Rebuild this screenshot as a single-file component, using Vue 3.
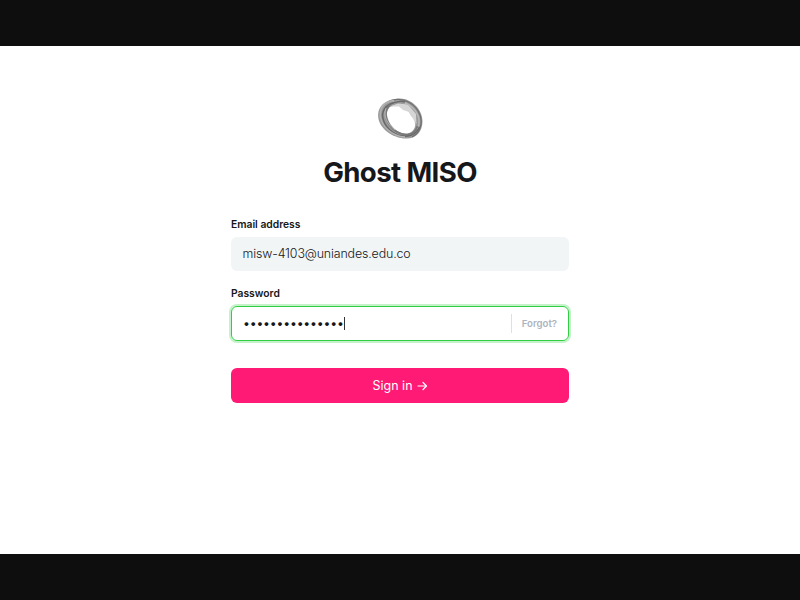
<script setup>
import { ref } from 'vue'

const email = ref('misw-4103@uniandes.edu.co')
const masked = ref('•'.repeat(15))
</script>

<template>
  <div class="screen">
    <main class="panel">
      <form class="form" @submit.prevent>
        <header class="head">
          <svg class="logo" viewBox="0 0 60 56" aria-hidden="true">
            <path d="M22 12C34 8 47 17 49 28C51 37 47 43 41 45L45 39C46 34 44 29 41 26L38 21L33 19L29 16L19 17Z" fill="#d3d3d3" />
            <path fill-rule="evenodd" fill="#9a9a9a" d="M29 8.400C41 7.800 52.500 19 52.500 31C52.500 42 46 49 36 48.600C22 48.200 9 38 8.200 27C7.300 16 16 8.800 29 8.400ZM28 14.500C21 14.300 16.500 18.500 17 25C18 34 26 43 35 43.800C42 44 46 38.500 45.500 32C44.500 22.500 37 14.600 28 14.500Z" />
            <path d="M28 13.500L38 14.500L46 24L46.500 34L43 27L39 22L33 20L29 16.500L22 16Z" fill="#d6d6d6" />
            <path d="M20 10.800C33 6 46 14 50 25C53 34 50 43 42 46.800" fill="none" stroke="#707070" stroke-width="1.300" />
            <path d="M23 12C35 9.500 45 17 48.500 27C50.500 35 47 42 41 45" fill="none" stroke="#b8b8b8" stroke-width="1.500" />
            <path d="M35 12C24 10 13 15.500 12.500 25C13 34 19 41.500 28 45C37 48 46 45 49.500 37" fill="none" stroke="#686868" stroke-width="1.600" />
            <path d="M24 10.500C15 11.500 10 17 10.200 26C12 37 22 46 35 47" fill="none" stroke="#b2b2b2" stroke-width="1.400" />
            <path d="M20 15C14.500 20 14.500 28 19.500 35C24 41 31 45 38 44.500C43 44 46 41 47.500 36" fill="none" stroke="#787878" stroke-width="1.800" />
            <path d="M16 18C13 26 17 34 25 40" fill="none" stroke="#c4c4c4" stroke-width=".8" />
          </svg>
          <h1 class="title">Ghost MISO</h1>
        </header>

        <div class="label">Email address</div>
        <div class="field email">{{ email }}</div>

        <div class="label second">Password</div>
        <div class="field password">
          <span class="dots">{{ masked }}</span>
          <span class="caret"></span>
          <button class="forgot" type="button">Forgot?</button>
        </div>

        <button class="submit" type="submit">
          <span>Sign in</span>
          <svg class="arrow" viewBox="0 0 11 10" aria-hidden="true">
            <path d="M1 5H9.500M6 1.500L9.500 5L6 8.500" />
          </svg>
        </button>
      </form>
    </main>
  </div>
</template>

<style>
body {
  margin: 0;
}
</style>

<style scoped>
.screen {
  box-sizing: border-box;
  height: 600px;
  padding: 46px 0;
  background: #0e0e0e;
  font-family: Inter, sans-serif;
  color: #15171a;
}
.panel {
  display: flex;
  justify-content: center;
  height: 508px;
  background: #fff;
}
.form {
  display: flex;
  flex-direction: column;
  width: 338px;
  padding-top: 44px;
}
.head {
  display: flex;
  flex-direction: column;
  align-items: center;
}
.logo {
  width: 60px;
  height: 56px;
}
.title {
  margin: 8px 0 0;
  font-size: 27.6px;
  line-height: 36px;
  font-weight: 700;
  letter-spacing: -0.6px;
  white-space: nowrap;
}
.label {
  margin-top: 26px;
  height: 16px;
  line-height: 16px;
  font-size: 10.3px;
  font-weight: 600;
}
.label.second {
  margin-top: 14px;
  margin-bottom: 1px;
}
.field {
  box-sizing: border-box;
  display: flex;
  align-items: center;
  border-radius: 6px;
}
.email {
  margin-top: 5px;
  height: 33.5px;
  margin-bottom: 0.5px;
  padding: 0 11.5px;
  background: #f1f5f6;
  font-size: 12.4px;
  font-weight: 300;
  letter-spacing: -0.13px;
  color: #15171a;
}
.password {
  margin-top: 4px;
  height: 35px;
  padding: 0 11px;
  border: 1px solid #30cf43;
  box-shadow: 0 0 0 2px #c5f2ca;
}
.dots {
  font-size: 12.3px;
  letter-spacing: -0.21px;
  white-space: nowrap;
}
.caret {
  width: 1px;
  height: 13px;
  background: #333;
}
.forgot {
  height: 19px;
  margin-left: auto;
  padding: 0 0 0 10px;
  border: 0;
  border-left: 1px solid #dde1e5;
  background: none;
  font: 600 9.6px/19px Inter, sans-serif;
  color: #abb4be;
}
.submit {
  display: flex;
  align-items: center;
  justify-content: center;
  gap: 4px;
  height: 35px;
  margin-top: 27px;
  padding: 0;
  border: 0;
  border-radius: 6px;
  background: #ff1a75;
  font: 400 12.5px/35px Inter, sans-serif;
  color: #fff;
}
.arrow {
  width: 11px;
  height: 10px;
  fill: none;
  stroke: #fff;
  stroke-width: 1.2;
  stroke-linecap: round;
  stroke-linejoin: round;
}
</style>
